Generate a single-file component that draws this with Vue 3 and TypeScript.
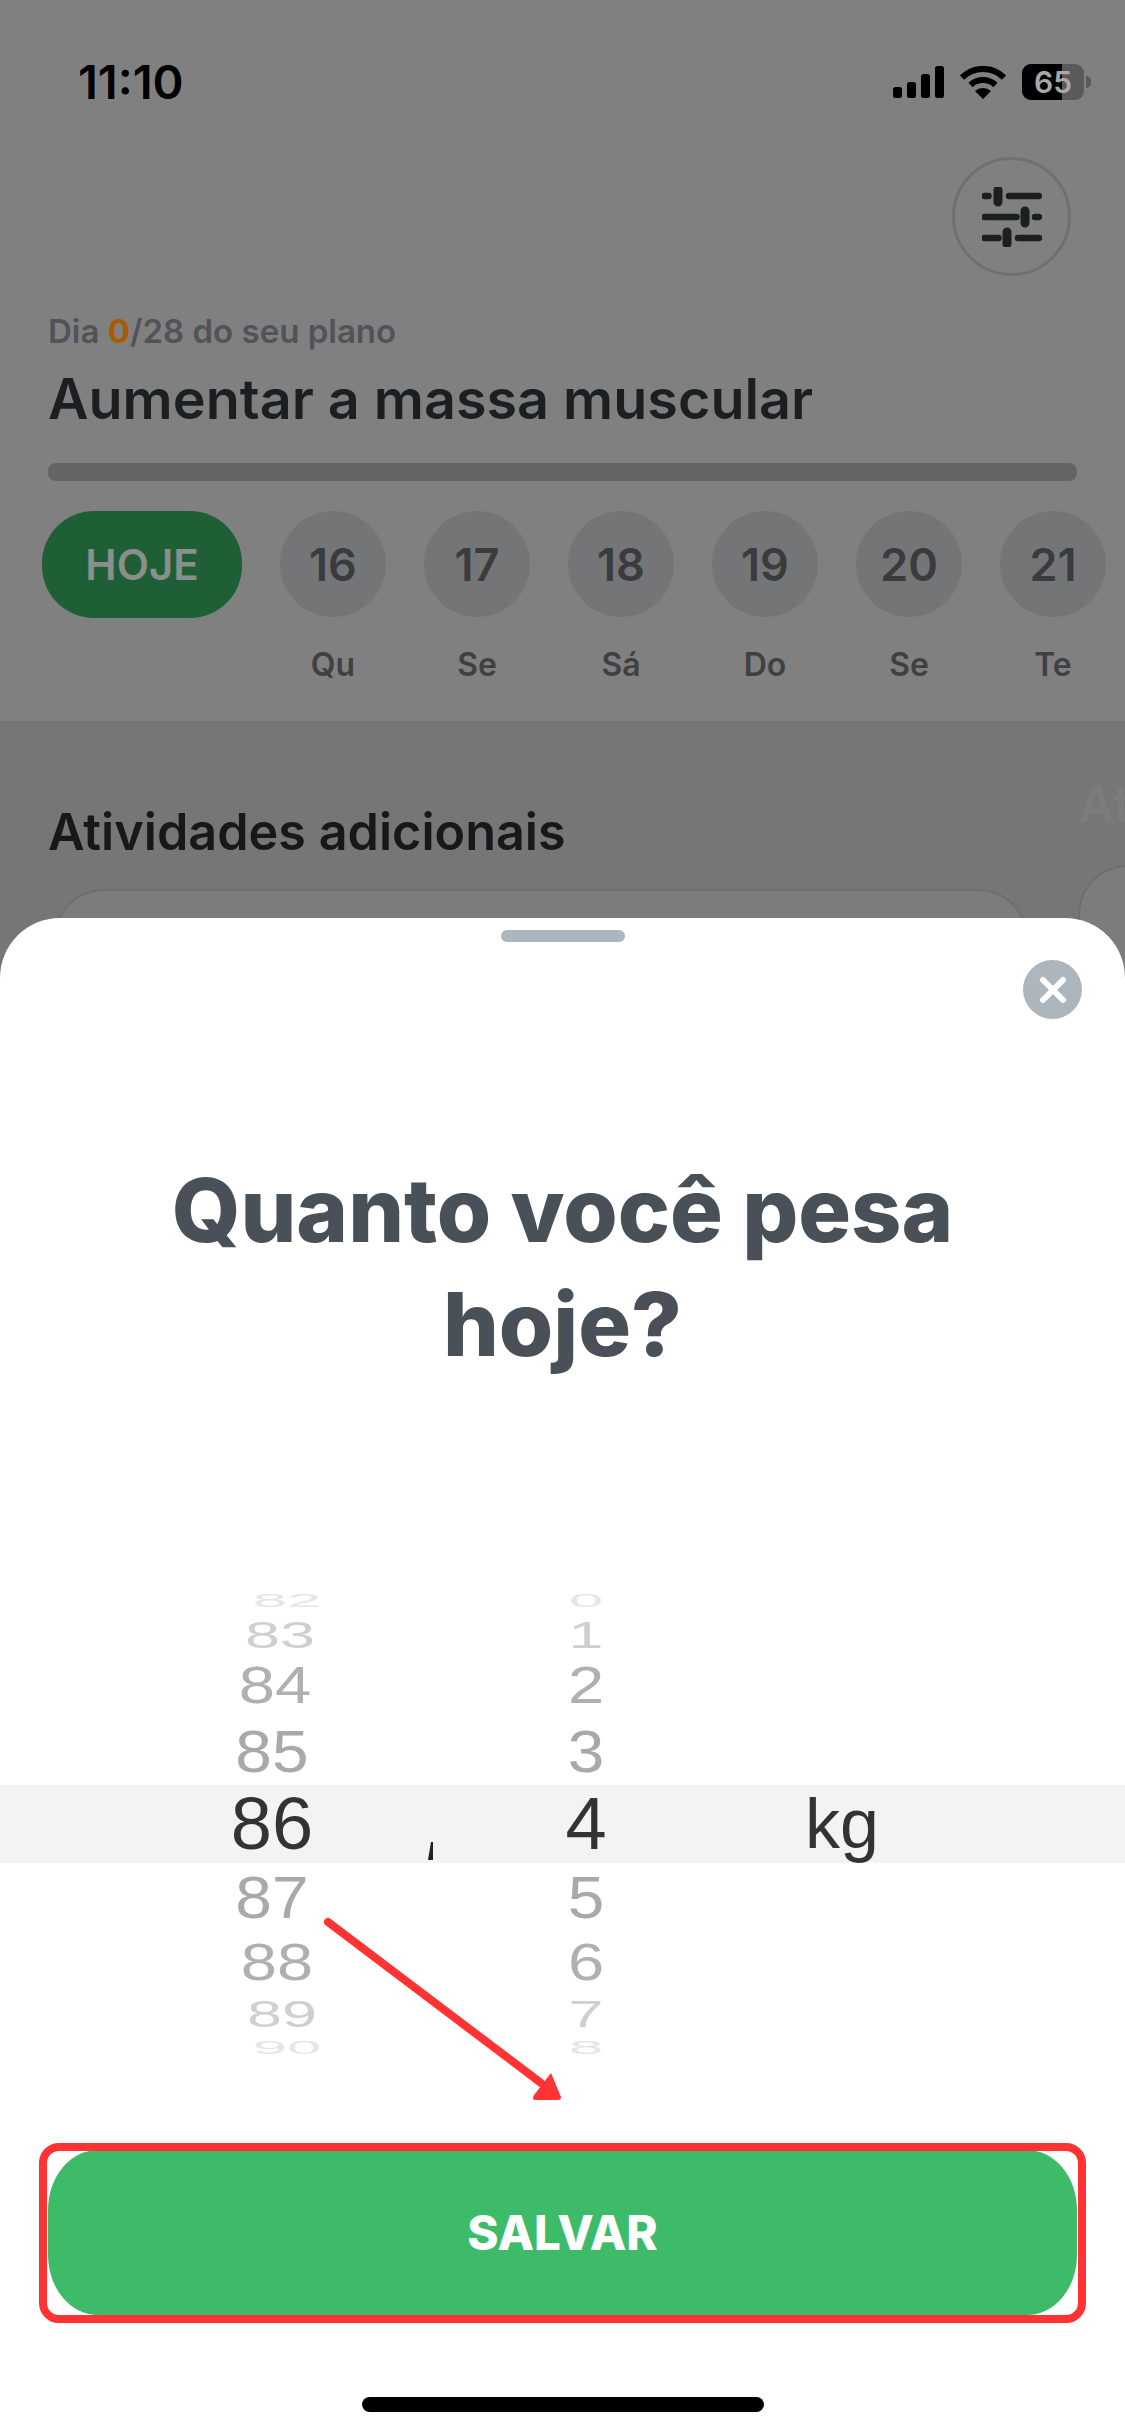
<template>
  <div class="screen">
    <div class="status-bar">
      <span class="time">11:10</span>
      <div class="status-icons">
        <svg class="signal" width="51" height="32" viewBox="0 0 51 32">
          <rect x="0" y="21" width="9" height="11" rx="2.5" />
          <rect x="14" y="16" width="9" height="16" rx="2.5" />
          <rect x="28" y="8" width="9" height="24" rx="2.5" />
          <rect x="42" y="0" width="9" height="32" rx="2.5" />
        </svg>
        <svg class="wifi" width="46" height="33" viewBox="0 0 46 33">
          <path d="M2 11.5 A30 30 0 0 1 44 11.5" fill="none" stroke="#000" stroke-width="6" />
          <path d="M10.5 19 A18 18 0 0 1 35.5 19" fill="none" stroke="#000" stroke-width="6" />
          <path d="M15 25 L23 33 L31 25 A12 12 0 0 0 15 25 Z" fill="#000" />
        </svg>
        <div class="battery">
          <div class="battery-fill"></div>
          <span class="battery-text">65</span>
          <i class="battery-nub"></i>
        </div>
      </div>
    </div>

    <div class="filter-row">
      <button class="filter-btn">
        <svg width="60" height="60" viewBox="0 0 60 60" fill="none" stroke="#1b1f20" stroke-linecap="round">
          <path d="M2.5 9h4M27 9h30M2.5 30h32M53 30h4M2.5 51h14M36 51h21" stroke-width="6.5" />
          <path d="M16 3v12M43 24v12M25 45v12" stroke-width="9" />
        </svg>
      </button>
    </div>

    <div class="plan">
      <p class="plan-day">Dia <span class="plan-count">0</span>/28 do seu plano</p>
      <h1 class="plan-title">Aumentar a massa muscular</h1>
      <div class="progress"></div>
    </div>

    <div class="days">
      <div class="day-col">
        <div class="today">HOJE</div>
      </div>
      <div v-for="day in days" :key="day.num" class="day-col">
        <div class="day-circle">{{ day.num }}</div>
        <span class="day-label">{{ day.label }}</span>
      </div>
    </div>

    <div class="activities">
      <div class="activity-col">
        <h2 class="activity-title">Atividades adicionais</h2>
        <div class="activity-card"></div>
      </div>
      <div class="activity-col ghost">
        <h2 class="activity-title">Atividades</h2>
        <div class="activity-card"></div>
      </div>
    </div>

    <div class="sheet">
      <div class="handle"></div>
      <button class="close">
        <svg width="32" height="32" viewBox="0 0 32 32" stroke="#fff" stroke-width="6" stroke-linecap="round">
          <path d="M6 6l20 20M26 6L6 26" />
        </svg>
      </button>
      <h2 class="question">Quanto você pesa<br />hoje?</h2>

      <div class="picker">
        <div
          v-for="row in rows"
          :key="row.whole"
          class="picker-row"
          :class="{ selected: row.selected }"
          :style="{ height: row.height + 'px' }"
        >
          <span class="cell whole" :style="wholeStyle(row)">{{ row.whole }}</span>
          <span class="cell decimal" :style="decimalStyle(row)">{{ row.decimal }}</span>
          <span class="cell unit">{{ row.selected ? 'kg' : '' }}</span>
        </div>
      </div>

      <button class="save">SALVAR</button>
      <div class="home-indicator"></div>
    </div>

    <svg class="annotation" width="1125" height="2436" viewBox="0 0 1125 2436">
      <path d="M428 1860 L431 1842 L433 1842 L433 1860 Z" fill="#222" />
      <path d="M328 1922 L541 2083" stroke="#ff3333" stroke-width="8" stroke-linecap="round" fill="none" />
      <path d="M551 2073 L561 2097 Q561 2100 558 2100 L536 2100 Q531 2100 534 2095 Z" fill="#ff3333" />
      <rect x="43" y="2147" width="1039" height="172" rx="16" fill="none" stroke="#ff3333" stroke-width="8" />
    </svg>
  </div>
</template>

<script setup lang="ts">
interface Day {
  num: number
  label: string
}

interface PickerRow {
  whole: string
  decimal: string
  height: number
  scaleX: number
  scaleY: number
  shift: number
  color: string
  selected?: boolean
}

const days: Day[] = [
  { num: 16, label: 'Qu' },
  { num: 17, label: 'Se' },
  { num: 18, label: 'Sá' },
  { num: 19, label: 'Do' },
  { num: 20, label: 'Se' },
  { num: 21, label: 'Te' },
]

const rows: PickerRow[] = [
  { whole: '82', decimal: '0', height: 32, scaleX: 0.83, scaleY: 0.26, shift: 15, color: '#e6e6e6' },
  { whole: '83', decimal: '1', height: 37, scaleX: 0.85, scaleY: 0.51, shift: 8, color: '#cfcfcf' },
  { whole: '84', decimal: '2', height: 65, scaleX: 0.88, scaleY: 0.7, shift: 3, color: '#b0b0b0' },
  { whole: '85', decimal: '3', height: 67, scaleX: 0.89, scaleY: 0.81, shift: 0, color: '#a9a9a9' },
  { whole: '86', decimal: '4', height: 78, scaleX: 1, scaleY: 1, shift: 0, color: '#333', selected: true },
  { whole: '87', decimal: '5', height: 69, scaleX: 0.89, scaleY: 0.81, shift: 0, color: '#a9a9a9' },
  { whole: '88', decimal: '6', height: 61, scaleX: 0.88, scaleY: 0.7, shift: 5, color: '#b0b0b0' },
  { whole: '89', decimal: '7', height: 42, scaleX: 0.85, scaleY: 0.51, shift: 10, color: '#cfcfcf' },
  { whole: '90', decimal: '8', height: 24, scaleX: 0.83, scaleY: 0.26, shift: 15, color: '#e6e6e6' },
]

const wholeStyle = (row: PickerRow) => ({
  color: row.color,
  transform: `translateX(${row.shift}px) scale(${row.scaleX}, ${row.scaleY})`,
})

const decimalStyle = (row: PickerRow) => ({
  color: row.color,
  transform: `scale(${row.scaleX}, ${row.scaleY})`,
})
</script>

<style>
body {
  margin: 0;
}
</style>

<style scoped>
.screen {
  position: relative;
  width: 1125px;
  height: 2436px;
  overflow: hidden;
  background: #808080;
  font-family: Inter, "Noto Sans", sans-serif;
}

.status-bar {
  height: 157px;
  padding: 56px 41px 0 78px;
  box-sizing: border-box;
  display: flex;
  justify-content: space-between;
  align-items: flex-start;
}

.time {
  font-size: 47px;
  line-height: 52px;
  font-weight: 600;
  color: #000;
}

.status-icons {
  display: flex;
  align-items: center;
  gap: 16px;
  margin-top: 8px;
}

.signal rect {
  fill: #000;
}

.battery {
  position: relative;
  width: 62px;
  height: 36px;
  border-radius: 9px;
  background: #5a5a5a;
  overflow: visible;
  display: flex;
  align-items: center;
  justify-content: center;
}

.battery-fill {
  position: absolute;
  left: 0;
  top: 0;
  bottom: 0;
  width: 40px;
  background: #000;
  border-radius: 9px 0 0 9px;
}

.battery-text {
  position: relative;
  font-size: 30px;
  font-weight: 600;
  color: #a8a8a8;
}

.battery-nub {
  position: absolute;
  right: -7px;
  top: 12px;
  width: 5px;
  height: 12px;
  border-radius: 0 6px 6px 0;
  background: #5a5a5a;
}

.filter-row {
  display: flex;
  justify-content: flex-end;
  padding-right: 54px;
}

.filter-btn {
  width: 119px;
  height: 119px;
  padding: 0;
  border: 3px solid #6f7072;
  border-radius: 50%;
  background: transparent;
  display: flex;
  align-items: center;
  justify-content: center;
}

.plan {
  padding: 35px 48px 0;
}

.plan-day {
  margin: 0;
  font-size: 33px;
  line-height: 40px;
  font-weight: 600;
  color: #505358;
}

.plan-count {
  color: #a85c00;
  font-weight: 700;
}

.plan-title {
  margin: 16px 0 0;
  font-size: 55.7px;
  line-height: 64px;
  font-weight: 600;
  color: #1c1f21;
}

.progress {
  margin-top: 32px;
  height: 18px;
  border-radius: 8px;
  background: #636466;
}

.days {
  height: 240px;
  box-sizing: border-box;
  padding: 30px 0 0 42px;
  display: flex;
  gap: 38px;
}

.day-col {
  display: flex;
  flex-direction: column;
  align-items: center;
}

.today {
  width: 200px;
  height: 107px;
  border-radius: 52px;
  background: #1f5f35;
  color: #8a8f8c;
  font-size: 42px;
  font-weight: 600;
  display: flex;
  align-items: center;
  justify-content: center;
}

.day-circle {
  width: 106px;
  height: 106px;
  border-radius: 50%;
  background: #747577;
  color: #3a3b3d;
  font-size: 45px;
  font-weight: 600;
  display: flex;
  align-items: center;
  justify-content: center;
}

.day-label {
  margin-top: 28px;
  font-size: 32px;
  line-height: 40px;
  font-weight: 600;
  color: #3f4042;
}

.activities {
  height: 1716px;
  background: #757678;
  padding: 83px 0 0 48px;
  display: flex;
  gap: 50px;
  box-sizing: border-box;
}

.activity-col {
  flex: none;
  width: 980px;
}

.activity-title {
  margin: 0;
  font-size: 50.3px;
  line-height: 56px;
  font-weight: 600;
  color: #16181a;
}

.activity-card {
  margin-top: 29px;
  height: 200px;
  margin-left: 6px;
  border: 2px solid #6d6e70;
  border-radius: 50px;
  background: #7b7c7e;
}

.ghost {
  margin-top: -27px;
}

.ghost .activity-title {
  color: #7b7c7e;
}

.ghost .activity-card {
  margin-left: 0;
  margin-top: 32px;
}

.sheet {
  position: absolute;
  left: 0;
  right: 0;
  top: 918px;
  bottom: 0;
  background: #fff;
  border-radius: 60px 60px 0 0;
  display: flex;
  flex-direction: column;
  align-items: center;
}

.handle {
  margin-top: 12px;
  width: 124px;
  height: 12px;
  border-radius: 6px;
  background: #adb5bd;
}

.close {
  position: absolute;
  top: 42px;
  right: 43px;
  width: 59px;
  height: 59px;
  padding: 0;
  border: none;
  border-radius: 50%;
  background: #adb5bd;
  display: flex;
  align-items: center;
  justify-content: center;
}

.question {
  margin: 211px 0 0;
  font-size: 88px;
  line-height: 114px;
  font-weight: 800;
  color: #495057;
  text-align: center;
}

.picker {
  margin-top: 0;
  align-self: stretch;
  position: absolute;
  top: 666px;
  left: 0;
  right: 0;
  font-family: "Liberation Sans", sans-serif;
}

.picker-row {
  display: grid;
  grid-template-columns: 544px 84px 1fr;
  grid-template-rows: minmax(0, 1fr);
  align-items: center;
}

.picker-row.selected {
  background: #f3f3f3;
}

.cell {
  font-size: 74px;
  line-height: 1;
}

.whole {
  text-align: center;
}

.decimal {
  text-align: center;
}

.unit {
  padding-left: 177px;
  color: #333;
  font-size: 70px;
}

.save {
  position: absolute;
  left: 48px;
  right: 48px;
  top: 1232px;
  height: 165px;
  border: none;
  border-radius: 50px / 60px;
  background: #3dbb69;
  color: #fff;
  font-family: inherit;
  font-size: 47.5px;
  font-weight: 800;
}

.home-indicator {
  position: absolute;
  left: 362px;
  bottom: 24px;
  width: 402px;
  height: 15px;
  border-radius: 8px;
  background: #000;
}

.annotation {
  position: absolute;
  left: 0;
  top: 0;
  pointer-events: none;
}
</style>
